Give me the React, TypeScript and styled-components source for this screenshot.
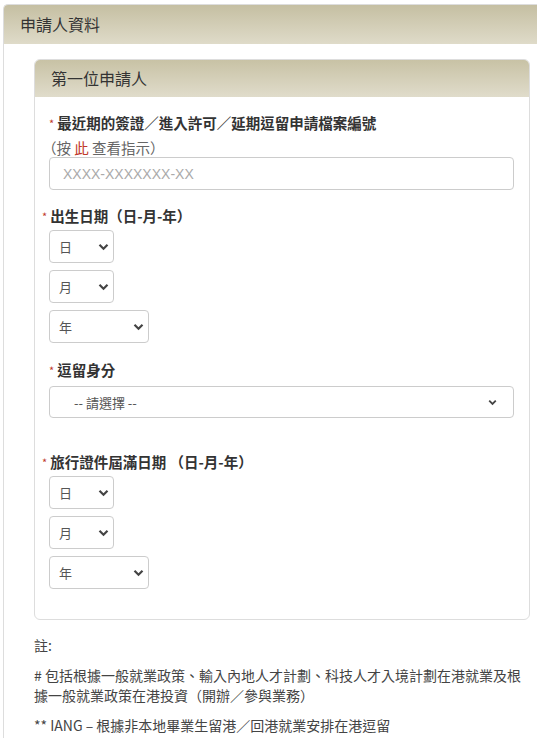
import React from "react";
import styled, { createGlobalStyle } from "styled-components";

const GlobalStyle = createGlobalStyle`
  html, body {
    margin: 0;
    padding: 0;
    background: #fff;
    overflow-x: hidden;
  }
  body {
    font-family: "Noto Sans CJK TC", "Liberation Sans", sans-serif;
    color: #333;
    font-size: 14px;
  }
`;

const ChevronIcon = ({ small }: { small?: boolean }) => (
  <svg width={small ? 9 : 11} height={small ? 7 : 8} viewBox="0 0 11 8">
    <path d="M1.5 1.8 L5.5 5.8 L9.5 1.8" fill="none" stroke="#444" strokeWidth="2.2" />
  </svg>
);

const DateSelects = () => (
  <>
    <SelectBox size="sm">
      <Select defaultValue="">
        <option value="">日</option>
      </Select>
      <Chevron><ChevronIcon /></Chevron>
    </SelectBox>
    <SelectBox size="sm">
      <Select defaultValue="">
        <option value="">月</option>
      </Select>
      <Chevron><ChevronIcon /></Chevron>
    </SelectBox>
    <SelectBox size="md">
      <Select defaultValue="">
        <option value="">年</option>
      </Select>
      <Chevron><ChevronIcon /></Chevron>
    </SelectBox>
  </>
);

const App = () => {
  return (
    <>
      <GlobalStyle />
      <Page>
        <Panel>
          <PanelHeader>申請人資料</PanelHeader>
          <PanelBody>
            <InnerPanel>
              <InnerHeader>第一位申請人</InnerHeader>
              <InnerBody>
                <Field>
                  <Label>
                    <Req>*</Req>最近期的簽證／進入許可／延期逗留申請檔案編號
                  </Label>
                  <Hint>
                    （按 <HintLink>此</HintLink> 查看指示）
                  </Hint>
                  <TextInput placeholder="XXXX-XXXXXXX-XX" />
                </Field>

                <DateField>
                  <Label tight>
                    <Req>*</Req>出生日期（日-月-年）
                  </Label>
                  <DateSelects />
                </DateField>

                <Field>
                  <Label>
                    <Req>*</Req>逗留身分
                  </Label>
                  <SelectBox size="full">
                    <Select defaultValue="" wide>
                      <option value="">-- 請選擇 --</option>
                    </Select>
                    <Chevron wide><ChevronIcon small /></Chevron>
                  </SelectBox>
                </Field>

                <DateField spaced>
                  <Label tight>
                    <Req>*</Req>旅行證件屆滿日期 （日-月-年）
                  </Label>
                  <DateSelects />
                </DateField>
              </InnerBody>
            </InnerPanel>

            <Notes>
              <NoteLine>註:</NoteLine>
              <NoteLine>
                # 包括根據一般就業政策、輸入內地人才計劃、科技人才入境計劃在港就業及根據一般就業政策在港投資（開辦／參與業務）
              </NoteLine>
              <NoteLine>** IANG – 根據非本地畢業生留港／回港就業安排在港逗留</NoteLine>
            </Notes>
          </PanelBody>
        </Panel>
      </Page>
    </>
  );
};

export default App;

const Page = styled.div`
  padding: 4px 0 0 3px;
`;

const Panel = styled.div`
  border: 1px solid #ddd;
  border-right: none;
  border-radius: 5px 0 0 0;
  margin-right: -4px;
`;

const PanelHeader = styled.div`
  height: 39px;
  line-height: 39px;
  padding-left: 16px;
  font-size: 16px;
  color: #333;
  background: linear-gradient(to bottom, #c5bfa2, #dfdbc9);
  border-radius: 4px 0 0 0;
`;

const PanelBody = styled.div`
  padding: 15px 0 0 30px;
  margin-right: 11px;
`;

const InnerPanel = styled.div`
  border: 1px solid #ddd;
  border-radius: 6px;
`;

const InnerHeader = styled.div`
  height: 37px;
  line-height: 37px;
  padding-left: 16px;
  font-size: 16px;
  color: #333;
  background: linear-gradient(to bottom, #c8c2a5, #e0dccb);
  border-radius: 5px 5px 0 0;
`;

const InnerBody = styled.div`
  padding: 16px 15px 30px 14px;
  & > div:last-child {
    margin-bottom: 0;
  }
`;

const Field = styled.div`
  display: flex;
  flex-direction: column;
  margin-bottom: 16px;
`;

const DateField = styled.div<{ spaced?: boolean }>`
  display: flex;
  flex-direction: column;
  align-items: flex-start;
  gap: 7px;
  margin-top: ${p => (p.spaced ? "34px" : "0")};
  margin-bottom: 17px;
`;

const Label = styled.div<{ tight?: boolean }>`
  font-weight: bold;
  font-size: 14.5px;
  line-height: 20px;
  color: #333;
  margin-left: ${p => (p.tight ? "-7px" : "0")};
  margin-bottom: ${p => (p.tight ? "-3px" : "6px")};
`;

const Req = styled.span`
  color: #c0392b;
  font-size: 11px;
  font-weight: normal;
  vertical-align: top;
  margin-right: 3px;
`;

const Hint = styled.div`
  font-size: 14.5px;
  line-height: 18px;
  color: #666;
  margin-left: -7px;
  margin-bottom: 0;
`;

const HintLink = styled.span`
  color: #c0392b;
`;

const TextInput = styled.input`
  box-sizing: border-box;
  width: 100%;
  height: 33px;
  border: 1px solid #ccc;
  border-radius: 4px;
  padding: 0 13px;
  font-family: "Liberation Sans", sans-serif;
  font-size: 14px;
  color: #555;
  &::placeholder {
    color: #aaa;
  }
`;

const selectWidths = { sm: "65px", md: "100px", full: "100%" };

const SelectBox = styled.div<{ size: "sm" | "md" | "full" }>`
  position: relative;
  width: ${p => selectWidths[p.size]};
`;

const Select = styled.select<{ wide?: boolean }>`
  appearance: none;
  box-sizing: border-box;
  width: 100%;
  height: ${p => (p.wide ? "32px" : "33px")};
  border: 1px solid #ccc;
  border-radius: 4px;
  background: #fff;
  padding: 0 0 0 ${p => (p.wide ? "24px" : "9px")};
  font-family: "Noto Sans CJK TC", "Liberation Sans", sans-serif;
  font-size: 13px;
  color: #555;
`;

const Chevron = styled.span<{ wide?: boolean }>`
  position: absolute;
  right: ${p => (p.wide ? "17px" : "5px")};
  top: 13px;
  display: flex;
  pointer-events: none;
`;

const Notes = styled.div`
  padding: 15px 8px 10px 0;
`;

const NoteLine = styled.p`
  margin: 0 0 10px 0;
  font-size: 14px;
  line-height: 20px;
  color: #444;
`;
